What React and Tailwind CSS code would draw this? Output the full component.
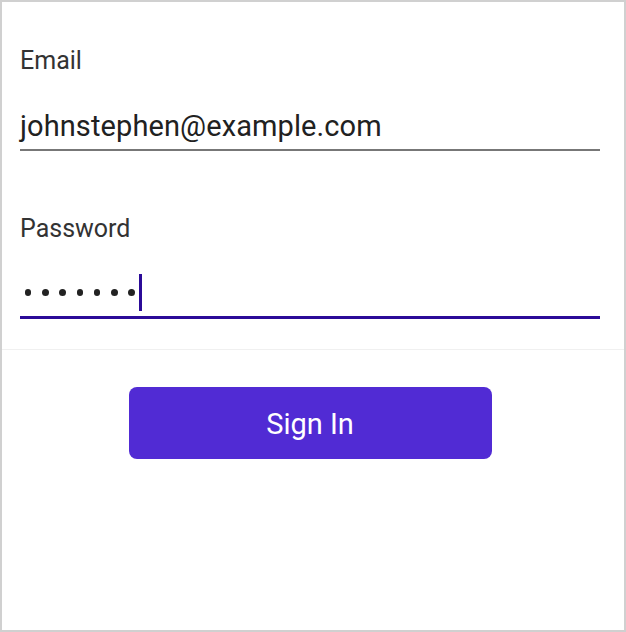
export default function App() {
  const dots = [0, 1, 2, 3, 4, 5, 6];
  return (
    <div
      className="w-[626px] h-[632px] border-2 border-[#d0d0d0] bg-white flex flex-col"
      style={{ fontFamily: "Roboto, 'Noto Sans', sans-serif" }}
    >
      <div className="pl-[18px] pr-[24px] pt-[45px]">
        <div className="text-[25px] leading-[28px] text-[#333333]">Email</div>
        <div className="mt-[34px] h-[42px] border-b-2 border-[#777777] text-[29px] leading-[34px] text-[#212121] tracking-[0.1px]">
          johnstephen@example.com
        </div>
        <div className="mt-[64px] text-[25px] leading-[28px] text-[#333333]">Password</div>
        <div className="mt-[26px] h-[50px] border-b-[3px] border-[#2B0B98] flex items-center">
          <div className="flex items-center gap-[10.75px] ml-[4.75px]">
            {dots.map((d) => (
              <span key={d} className="block w-[6.5px] h-[6.5px] rounded-full bg-[#222222]" />
            ))}
          </div>
          <span className="block ml-[4.5px] w-[3px] h-[37px] bg-[#2B0B98]" />
        </div>
      </div>
      <div className="mt-[30px] h-px bg-[#f0f0f0]" />
      <div className="pl-[18px] pr-[24px] pt-[37px] flex justify-center">
        <button className="w-[363px] h-[72px] pt-[2px] rounded-[8px] bg-[#512BD4] text-white text-[29px] leading-[32px]">
          Sign In
        </button>
      </div>
    </div>
  );
}
